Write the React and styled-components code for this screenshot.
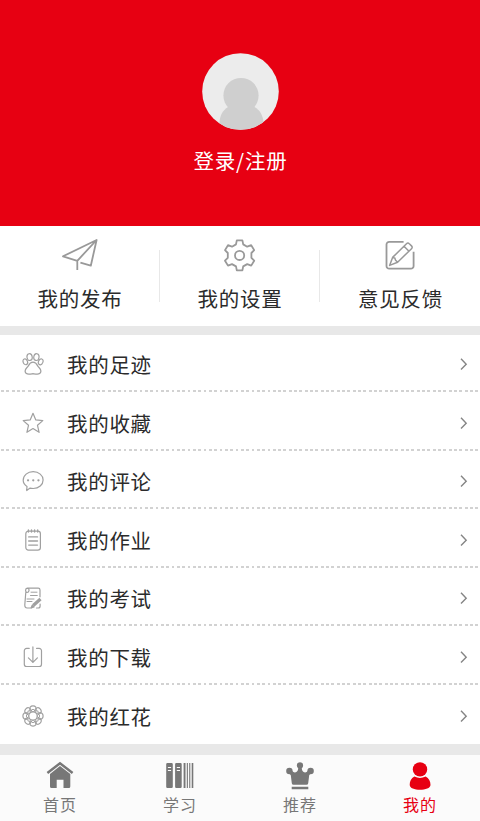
import styled, { createGlobalStyle } from "styled-components";

const GlobalStyle = createGlobalStyle`
  * {
    box-sizing: border-box;
  }
  body {
    margin: 0;
    background-color: #fff;
    font-family: "Noto Sans CJK SC", sans-serif;
  }
`;

const Page = styled.div`
  width: 480px;
  height: 821px;
  display: flex;
  flex-direction: column;
  overflow: hidden;
  background-color: #fff;
`;
const Header = styled.header`
  height: 226px;
  flex-shrink: 0;
  padding-top: 53px;
  display: flex;
  flex-direction: column;
  align-items: center;
  background-color: #e70012;
`;
const Avatar = styled.svg`
  width: 77px;
  height: 77px;
`;
const Login = styled.div`
  margin-top: 15px;
  padding-left: 1px;
  font-size: 20.5px;
  line-height: 30px;
  letter-spacing: 0.8px;
  color: white;
`;
const Shortcuts = styled.section`
  height: 100px;
  flex-shrink: 0;
  display: grid;
  grid-template-columns: repeat(3, 1fr);
  align-items: center;
`;
const Shortcut = styled.div`
  height: 52px;
  display: flex;
  flex-direction: column;
  align-items: center;
  justify-content: center;
  border-right: 1px solid #e8e8e8;

  &:last-child {
    border-right: none;
  }
`;
const ShortcutIcon = styled.svg`
  width: 40px;
  height: 36px;
  flex-shrink: 0;
  fill: none;
  stroke: #999;
  stroke-width: 1.8;
  stroke-linejoin: round;
`;
const ShortcutText = styled.span`
  margin-top: 8px;
  padding-left: 1px;
  font-size: 20.5px;
  line-height: 30px;
  letter-spacing: 0.7px;
  color: #2b2b2b;
`;
const Gap = styled.div`
  height: ${(props) => props.$height}px;
  flex-shrink: 0;
  background-color: #e8e8e8;
`;
const Menu = styled.ul`
  height: 408.6px;
  flex-shrink: 0;
  margin: 0;
  padding: 0;
  list-style: none;
`;
const MenuItem = styled.li`
  height: 58.6px;
  padding: 2.6px 11px 0 22px;
  display: flex;
  align-items: center;
  background: repeating-linear-gradient(
      90deg,
      transparent 0 1px,
      #d2d2d2 1px 3.9px,
      transparent 3.9px 5.33px
    )
    left bottom / 100% 2px no-repeat;

  &:first-child {
    height: 57px;
    padding-top: 1px;
  }
  &:last-child {
    background: none;
  }
`;
const MenuIcon = styled.svg`
  width: 22px;
  height: 22px;
  fill: none;
  stroke: #a0a0a0;
  stroke-width: 1.2;
  stroke-linecap: round;
  stroke-linejoin: round;
`;
const MenuText = styled.span`
  flex: 1;
  margin-left: 23px;
  font-size: 20.5px;
  line-height: 30px;
  letter-spacing: 0.7px;
  color: #2b2b2b;
`;
const Arrow = styled.svg`
  width: 10px;
  height: 14px;
  fill: none;
  stroke: #858585;
  stroke-width: 1.4;
`;
const TabBar = styled.nav`
  flex: 1;
  display: grid;
  grid-template-columns: repeat(4, 1fr);
  background-color: #fbfbfb;
`;
const Tab = styled.div`
  padding-top: 6px;
  display: flex;
  flex-direction: column;
  align-items: center;
  color: ${(props) => (props.$active ? "#e70012" : "#777")};
`;
const TabIcon = styled.svg`
  width: 30px;
  height: 30px;
  fill: currentColor;
`;
const TabText = styled.span`
  margin-top: 1px;
  font-size: 16px;
  line-height: 24px;
  letter-spacing: 0.9px;
`;

const shortcuts = [
  {
    text: "我的发布",
    icon: (
      <path d="M17.3 31V21.8L3 17.3 36.6 1 17.3 21.8M36.6 1l-5.8 25.7-10.4-3" />
    ),
  },
  {
    text: "我的设置",
    icon: (
      <>
        <path d="M16.8 1.4h5.6l.8 4 4 2.3 4-1.5 3 4.9-2.8 2.9v4.8l2.8 2.9-3 4.9-4-1.5-4 2.3-.8 4h-5.6l-.8-4-4-2.3-4 1.5-3-4.9 2.8-2.9V14l-2.8-2.9 3-4.9 4 1.5 4-2.3z" />
        <circle cx="19.6" cy="16.4" r="4.6" />
      </>
    ),
  },
  {
    text: "意见反馈",
    icon: (
      <>
        <path d="M23.6 2.8H9.2a2.7 2.7 0 0 0-2.7 2.7v21.4a2.7 2.7 0 0 0 2.7 2.7h21.7a2.7 2.7 0 0 0 2.7-2.7V12.8" />
        <path
          d="M9.6 26.4l3-8L26.5 4.8q1.4-1.4 2.8 0l2.2 2.1q1.4 1.4 0 2.8L17.6 23.2zM12.6 18.4l2.2.5.6 2 2.2 2.3M24 7.2l5 5"
          strokeWidth="1.5"
        />
      </>
    ),
  },
];

const petals = [0, 45, 90, 135, 180, 225, 270, 315];

const menu = [
  {
    text: "我的足迹",
    icon: (
      <>
        <ellipse cx="7.6" cy="4.1" rx="2.6" ry="3.4" transform="rotate(-8 7.6 4.1)" />
        <ellipse cx="14.4" cy="4.1" rx="2.6" ry="3.4" transform="rotate(8 14.4 4.1)" />
        <ellipse cx="3.3" cy="8.8" rx="2.2" ry="3" transform="rotate(-22 3.3 8.8)" />
        <ellipse cx="18.7" cy="8.8" rx="2.2" ry="3" transform="rotate(22 18.7 8.8)" />
        <path d="M11 9.2c2.7 0 3.8 2 4.7 3.7.9 1.7 3.2 2.6 3.2 5.2 0 3.8-4.2 3-7.9 2.6-3.7.4-7.9 1.2-7.9-2.6 0-2.6 2.3-3.5 3.2-5.2.9-1.7 2-3.7 4.7-3.7z" />
      </>
    ),
  },
  {
    text: "我的收藏",
    icon: (
      <path d="M11 1.3l2.8 6.6 7 .7-5.3 4.7 1.6 7-6.1-3.7-6.1 3.7 1.6-7L1.2 8.6l7-.7z" />
    ),
  },
  {
    text: "我的评论",
    icon: (
      <>
        <path d="M4.7 20.5l.3-4.1C2.7 15 1.2 12.8 1.2 10.3c0-5 4.4-8.6 10-8.6s9.9 3.6 9.9 8.3-4.3 8.5-9.9 8.5c-1.1 0-2.1-.1-3.1-.4z" />
        <path d="M6 10.3h.1M11.2 10.3h.1M16.4 10.3h.1" strokeWidth="2.2" />
      </>
    ),
  },
  {
    text: "我的作业",
    icon: (
      <>
        <rect x="3.8" y="2.2" width="14.6" height="19" rx="2.6" />
        <path d="M6.7 7.9h8.8M6.7 12h8.8M6.7 16.1h8.8" strokeWidth="1.4" />
        <path d="M6.4 1v2M9.5 1v2M12.6 1v2M15.7 1v2" strokeWidth="1.4" />
      </>
    ),
  },
  {
    text: "我的考试",
    icon: (
      <>
        <path d="M5.3 1.2h10.9q1.8 0 1.8 1.8v6.8M5.3 1.2C3 1.6 3.2 4.8 4.8 5.5c2.4.2 3.3-4 .5-4.3M3.8 5.3l-1 12.4q-.1 3.3 2.3 3.3h4M14.5 21h1.8q1.8 0 1.8-2v-2" />
        <path d="M9 5.2h6M8.5 8.5h6.8M5 12h7M5 14.5h5" strokeWidth="1" />
        <path d="M18.5 12l-7.3 6.5" strokeWidth="3.2" strokeLinecap="butt" />
        <path d="M9.2 20.8l1-2.6 1.8 1.8z" fill="#a0a0a0" />
      </>
    ),
  },
  {
    text: "我的下载",
    icon: (
      <path d="M7.2 2.4H4.6a2.3 2.3 0 0 0-2.3 2.3v13.5a2.3 2.3 0 0 0 2.3 2.3h12.6a2.3 2.3 0 0 0 2.3-2.3V4.7a2.3 2.3 0 0 0-2.3-2.3h-2.6M10.9.9v15.5M6.4 11.9l4.5 4.5 4.5-4.5" />
    ),
  },
  {
    text: "我的红花",
    icon: (
      <>
        <circle cx="11" cy="11" r="4.3" strokeWidth="1.4" />
        {petals.map((angle) => (
          <g key={angle} transform={`rotate(${angle} 11 11)`}>
            <path d="M8.2 5.9C6.7 2.5 8.8.9 11 .9s4.3 1.6 2.8 5" />
            <path d="M9.2 5.8q1.8-3.3 3.6 0" strokeWidth="1" />
          </g>
        ))}
      </>
    ),
  },
];

const tabs = [
  {
    text: "首页",
    icon: (
      <>
        <path
          d="M2.4 12L15 2.3 27.6 12"
          fill="none"
          stroke="currentColor"
          strokeWidth="2.5"
        />
        <path d="M15 5.1l10.3 7.9v12.5q0 1.5-1.5 1.5h-5.3v-8.2h-6.8V27H6.5Q5 27 5 25.5V13z" />
      </>
    ),
  },
  {
    text: "学习",
    icon: (
      <>
        <path
          fillRule="evenodd"
          d="M2.4 2h4.2q1.2 0 1.2 1.2v22.6q0 1.2-1.2 1.2H2.4q-1.2 0-1.2-1.2V3.2Q1.2 2 2.4 2zm.5 4v1.1h3.2V6zm0 3v1.1h3.2V9zM11.3 2h4.2q1.2 0 1.2 1.2v22.6q0 1.2-1.2 1.2h-4.2q-1.2 0-1.2-1.2V3.2q0-1.2 1.2-1.2zm.5 4v1.1h3.2V6zm0 3v1.1h3.2V9z"
        />
        <path d="M18.6 2h1.9v25h-1.9zM21.8 2h1.1v25h-1.1zM24.2 2h1.1v25h-1.1zM26.7 2h1.6v25h-1.6z" />
      </>
    ),
  },
  {
    text: "推荐",
    icon: (
      <>
        <circle cx="15" cy="4.4" r="3.1" />
        <circle cx="4.4" cy="10" r="3.2" />
        <circle cx="25.6" cy="10" r="3.2" />
        <path d="M3.6 11.4l3.6-1.6c1.6 2.8 5 1.8 5.7-.8l.7-3.2h2.8l.7 3.2c.7 2.6 4.1 3.6 5.7.8l3.6 1.6-2.2 2.8-1 8q-.2 1.5-1.8 1.5H8.6q-1.6 0-1.8-1.5l-1-8zM6.7 25.8h16.6v2.4H6.7z" />
      </>
    ),
  },
  {
    text: "我的",
    active: true,
    icon: (
      <>
        <circle cx="15" cy="8.4" r="7.2" />
        <path d="M9.4 15.6q5.6 2.8 11.2 0c3.3 1.6 4.9 4.8 4.9 8.2 0 3.6-5.2 5-10.5 5s-10.3-1.4-10.3-5c0-3.4 1.4-6.6 4.7-8.2z" />
      </>
    ),
  },
];

const App = () => {
  return (
    <>
      <GlobalStyle />
      <Page>
        <Header>
          <Avatar viewBox="0 0 77 77">
            <defs>
              <clipPath id="avatar">
                <circle cx="38.5" cy="38.5" r="38.3" />
              </clipPath>
            </defs>
            <circle cx="38.5" cy="38.5" r="38.3" fill="#ececec" />
            <g clipPath="url(#avatar)" fill="#cfcfcf">
              <circle cx="39" cy="42.5" r="17.6" />
              <path d="M26 54c-5 3-8 8-8.5 15V78h44v-9c-.8-7-3.5-12-9-15z" />
            </g>
          </Avatar>
          <Login>登录/注册</Login>
        </Header>
        <Shortcuts>
          {shortcuts.map((item) => (
            <Shortcut key={item.text}>
              <ShortcutIcon viewBox="0 0 40 36">{item.icon}</ShortcutIcon>
              <ShortcutText>{item.text}</ShortcutText>
            </Shortcut>
          ))}
        </Shortcuts>
        <Gap $height={9} />
        <Menu>
          {menu.map((item) => (
            <MenuItem key={item.text}>
              <MenuIcon viewBox="0 0 22 22">{item.icon}</MenuIcon>
              <MenuText>{item.text}</MenuText>
              <Arrow viewBox="0 0 10 14">
                <path d="M2 1.8l5.2 5.4L2 12.6" />
              </Arrow>
            </MenuItem>
          ))}
        </Menu>
        <Gap $height={11.6} />
        <TabBar>
          {tabs.map((tab) => (
            <Tab key={tab.text} $active={tab.active}>
              <TabIcon viewBox="0 0 30 30">{tab.icon}</TabIcon>
              <TabText>{tab.text}</TabText>
            </Tab>
          ))}
        </TabBar>
      </Page>
    </>
  );
};

export default App;
